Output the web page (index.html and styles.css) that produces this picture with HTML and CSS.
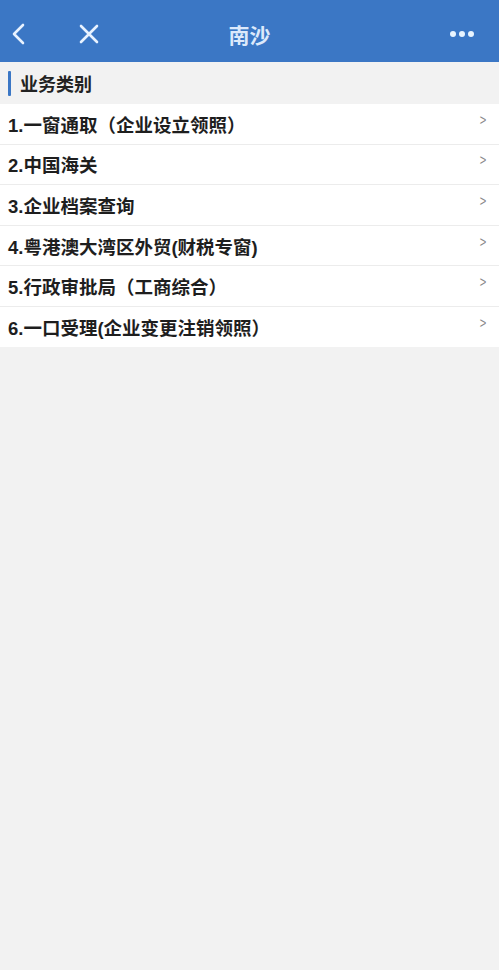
FILE: index.html
```html
<!DOCTYPE html>
<html lang="zh-CN">
<head>
    <meta charset="UTF-8">
    <meta name="viewport" content="width=device-width, initial-scale=1.0">
    <title>南沙</title>
    <link rel="stylesheet" href="styles.css">
</head>
<body>
    <div id="topbar">
        <div class="bar-left">
            <svg class="bar-icon" width="20" height="24" viewBox="0 0 20 24">
                <path d="M14 3 L5 12 L14 21" fill="none" stroke="#e8f2ff" stroke-width="2.6" stroke-linecap="round" stroke-linejoin="round"/>
            </svg>
            <svg class="bar-icon close" width="22" height="22" viewBox="0 0 22 22">
                <path d="M3 3 L19 19 M19 3 L3 19" fill="none" stroke="#e8f2ff" stroke-width="2.6" stroke-linecap="round"/>
            </svg>
        </div>
        <div class="bar-title">南沙</div>
        <div class="bar-right">
            <span class="dot"></span><span class="dot"></span><span class="dot"></span>
        </div>
    </div>

    <div class="section-title"><span class="mark"></span>业务类别</div>

    <ul id="biz_list">
        <li><span>1.一窗通取（企业设立领照）</span><i class="arrow">&gt;</i></li>
        <li><span>2.中国海关</span><i class="arrow">&gt;</i></li>
        <li><span>3.企业档案查询</span><i class="arrow">&gt;</i></li>
        <li><span>4.粤港澳大湾区外贸(财税专窗)</span><i class="arrow">&gt;</i></li>
        <li><span>5.行政审批局（工商综合）</span><i class="arrow">&gt;</i></li>
        <li><span>6.一口受理(企业变更注销领照）</span><i class="arrow">&gt;</i></li>
    </ul>
</body>
</html>
```

FILE: styles.css
```css
body {
    font-family: "Liberation Sans", "Noto Sans CJK SC", sans-serif;
    background-color: #f2f2f2;
    margin: 0;
    padding: 0;
}

/*顶部导航*/
#topbar {
    height: 62px;
    box-sizing: border-box;
    padding-top: 6px;
    background-color: #3b77c5;
    display: flex;
    align-items: center;
}

.bar-left {
    display: flex;
    align-items: center;
    padding-left: 9px;
    width: 130px;
    box-sizing: border-box;
}

.bar-icon {
    display: block;
}

.bar-icon.close {
    margin-left: 49px;
}

.bar-title {
    flex: 1;
    text-align: center;
    color: #dce9fb;
    font-size: 21px;
    font-weight: bold;
}

.bar-right {
    width: 130px;
    display: flex;
    justify-content: flex-end;
    gap: 3px;
    padding-right: 25px;
    box-sizing: border-box;
}

.dot {
    width: 6px;
    height: 6px;
    border-radius: 50%;
    background-color: #e8f4ff;
}

.section-title {
    height: 42px;
    display: flex;
    align-items: center;
    font-size: 18px;
    font-weight: bold;
    color: #222;
    padding-left: 8px;
}

.mark {
    width: 3px;
    height: 25px;
    background-color: #3b77c5;
    margin-right: 9px;
    border-radius: 1px;
}

ul {
    list-style: none;
    padding: 0;
    margin: 0;
}

li {
    background-color: #fff;
    height: 39.6px;
    border-bottom: 1px solid #ececec;
    display: flex;
    align-items: center;
    justify-content: space-between;
    padding: 0 12px 0 8px;
    font-size: 18.5px;
    font-weight: bold;
    color: #1e1e1e;
}

li:last-child {
    border-bottom: none;
}

.arrow {
    font-style: normal;
    font-weight: normal;
    font-size: 14px;
    color: #888;
    margin-top: -8px;
    transform: scaleX(0.8);
}
```
